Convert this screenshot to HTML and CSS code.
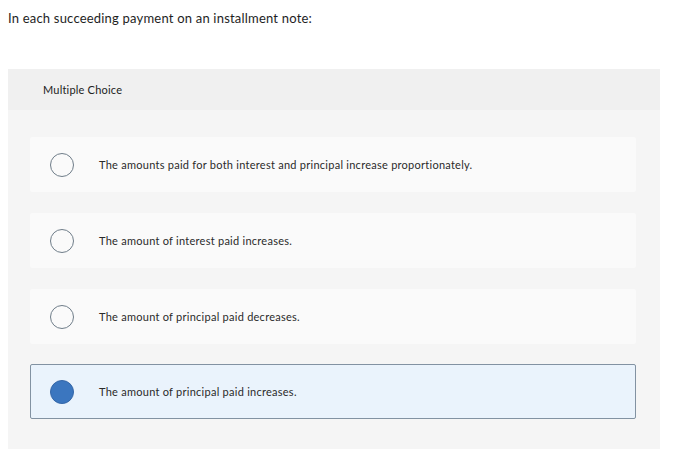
FILE: index.html
```html
<!DOCTYPE html>
<html>
<head>
<meta charset="utf-8">
<link rel="stylesheet" href="styles.css">
</head>
<body>
<p class="question">In each succeeding payment on an installment note:</p>
<div class="panel">
  <div class="panel-header">Multiple Choice</div>
  <div class="options">
    <div class="option"><span class="radio"></span><span class="label">The amounts paid for both interest and principal increase proportionately.</span></div>
    <div class="option"><span class="radio"></span><span class="label">The amount of interest paid increases.</span></div>
    <div class="option"><span class="radio"></span><span class="label">The amount of principal paid decreases.</span></div>
    <div class="option selected"><span class="radio"></span><span class="label">The amount of principal paid increases.</span></div>
  </div>
</div>
</body>
</html>
```
FILE: styles.css
```css
html, body {
  margin: 0;
  padding: 0;
  background: #ffffff;
  font-family: Lato, "Liberation Sans", sans-serif;
  color: #222222;
}
.question {
  margin: 0;
  padding: 10px 8px 0 8px;
  font-size: 13px;
  line-height: 16px;
  letter-spacing: 0.2px;
  color: #1e1e1e;
}
.panel {
  margin: 43px 0 0 8px;
  width: 652px;
  background: #f5f5f5;
}
.panel-header {
  height: 41px;
  padding-left: 35px;
  display: flex;
  align-items: center;
  background: #f0f0f0;
  font-size: 11px;
  letter-spacing: 0.2px;
  color: #222222;
}
.options {
  display: flex;
  flex-direction: column;
  gap: 21px;
  padding: 27px 24px 30px 22px;
}
.option {
  height: 55px;
  box-sizing: border-box;
  display: flex;
  align-items: center;
  padding-left: 20px;
  background: #fafafa;
  border-radius: 2px;
}
.option + .option.selected {
  margin-top: -1px;
}
.radio {
  width: 24px;
  height: 24px;
  box-sizing: border-box;
  border: 1.5px solid #6f7d89;
  border-radius: 50%;
  flex: none;
}
.label {
  margin-left: 25px;
  font-size: 11px;
  letter-spacing: 0.26px;
  color: #2a2a2a;
}
.option.selected {
  background: #eaf3fc;
  border: 1px solid #8292a2;
  padding-left: 19px;
}
.option.selected .label {
  margin-left: 25px;
}
.option.selected .radio {
  background: #3b76bf;
  border-color: #3567a8;
}
```
